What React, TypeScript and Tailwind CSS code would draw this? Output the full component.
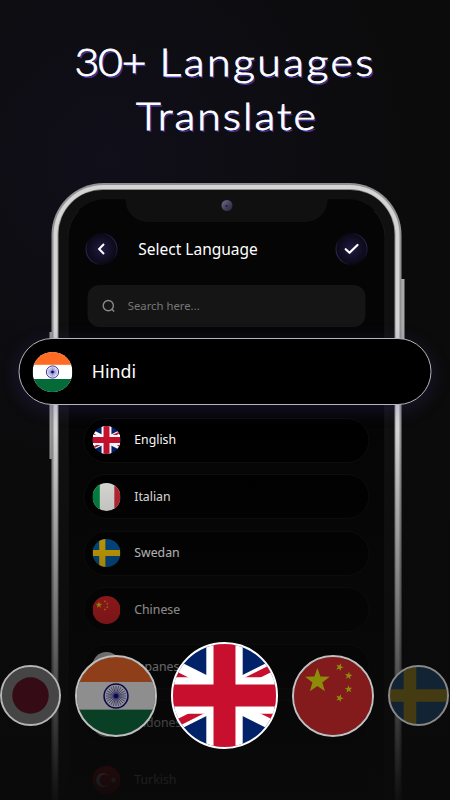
import React from "react";

type FlagName = "in" | "gb" | "it" | "se" | "cn" | "jp" | "id" | "tr" | "cnBig";

function star(cx: number, cy: number, r: number, rot = 0) {
  const pts: string[] = [];
  for (let i = 0; i < 10; i++) {
    const a = ((i * 36 - 90 + rot) * Math.PI) / 180;
    const q = i % 2 ? r * 0.4 : r;
    pts.push(`${(cx + q * Math.cos(a)).toFixed(2)},${(cy + q * Math.sin(a)).toFixed(2)}`);
  }
  return pts.join(" ");
}

const spokes = Array.from({ length: 24 }, (_, i) => (i * 15 * Math.PI) / 180);

function FlagArt({ name }: { name: FlagName }) {
  switch (name) {
    case "in":
      return (
        <g>
          <rect width="100" height="100" fill="#fff" />
          <rect width="100" height="32" fill="#ff6b22" />
          <rect y="67.5" width="100" height="33" fill="#046a38" />
          <circle cx="50" cy="50" r="15.3" fill="none" stroke="#07038d" strokeWidth="2" />
          <circle cx="50" cy="50" r="3" fill="#07038d" />
          {spokes.map((a) => (
            <line key={a} x1="50" y1="50" x2={50 + 13 * Math.cos(a)} y2={50 + 13 * Math.sin(a)} stroke="#07038d" strokeWidth="0.75" />
          ))}
        </g>
      );
    case "gb":
      return (
        <svg x="0" y="0" width="100" height="100" viewBox="15 0 30 30">
          <rect width="60" height="30" fill="#012169" />
          <path d="M0 0L60 30M60 0L0 30" stroke="#fff" strokeWidth="6" />
          <path d="M0 0L30 15V17.236L-4.472 0ZM60 30L30 15V12.764L64.472 30ZM60 0L30 15H25.528L55.528 0ZM0 30L30 15H34.472L4.472 30Z" fill="#c8102e" />
          <path d="M30 0V30M0 15H60" stroke="#fff" strokeWidth="10.6" />
          <path d="M30 0V30M0 15H60" stroke="#c8102e" strokeWidth="6.4" />
        </svg>
      );
    case "it":
      return (
        <g>
          <rect width="100" height="100" fill="#f4f5f0" />
          <rect width="26" height="100" fill="#009246" />
          <rect x="78" width="22" height="100" fill="#ce2b37" />
        </g>
      );
    case "se":
      return (
        <g>
          <rect width="100" height="100" fill="#0059a6" />
          <path d="M24 0h22v39h54v22H46v39H24V61H0V39h24z" fill="#fecb00" />
        </g>
      );
    case "cnBig":
      return (
        <g fill="#ffff00">
          <rect width="100" height="100" fill="#ee2226" />
          <polygon points={star(30, 30.5, 16.5)} />
          <polygon points={star(58.5, 13, 5.2, 20)} />
          <polygon points={star(70, 24, 5.2, 8)} />
          <polygon points={star(70, 41.3, 5.2, -5)} />
          <polygon points={star(58.5, 52.8, 5.2, 20)} />
        </g>
      );
    case "cn":
      return (
        <g fill="#ffee00">
          <rect width="100" height="100" fill="#ee2226" />
          <polygon points={star(23, 32, 12)} />
          <polygon points={star(44, 19, 4.5, 20)} />
          <polygon points={star(53, 28, 4.5, 8)} />
          <polygon points={star(53, 40, 4.5)} />
          <polygon points={star(44, 48, 4.5, 20)} />
        </g>
      );
    case "jp":
      return (
        <g>
          <rect width="100" height="100" fill="#fff" />
          <circle cx="50" cy="50" r="32" fill="#bc1038" />
        </g>
      );
    case "id":
      return (
        <g>
          <rect width="100" height="100" fill="#fff" />
          <rect width="100" height="50" fill="#ce1126" />
        </g>
      );
    case "tr":
      return (
        <g>
          <rect width="100" height="100" fill="#e30a17" />
          <circle cx="38" cy="50" r="25" fill="#fff" />
          <circle cx="45" cy="50" r="20" fill="#e30a17" />
          <polygon points={star(75, 50, 12, -90)} fill="#fff" />
        </g>
      );
  }
}

function Flag({ name, className = "" }: { name: FlagName; className?: string }) {
  return (
    <span className={`block shrink-0 overflow-hidden rounded-full ${className}`}>
      <svg viewBox="0 0 100 100" className="block h-full w-full">
        <FlagArt name={name} />
      </svg>
    </span>
  );
}

const languages: { name: string; flag: FlagName }[] = [
  { name: "English", flag: "gb" },
  { name: "Italian", flag: "it" },
  { name: "Swedan", flag: "se" },
  { name: "Chinese", flag: "cn" },
  { name: "Japanese", flag: "jp" },
  { name: "Indonesian", flag: "id" },
  { name: "Turkish", flag: "tr" },
];

function RoundButton({ children }: { children: React.ReactNode }) {
  return (
    <button className="flex size-8 items-center justify-center rounded-full bg-[linear-gradient(65deg,#4a3c92,#0a0814_32%,#0a0814_65%,#40347c)] p-px">
      <span className="flex size-full items-center justify-center rounded-full bg-[radial-gradient(circle,#211a45_0%,#151029_40%,#060509_90%)]">
        {children}
      </span>
    </button>
  );
}

function Phone() {
  return (
    <div className="relative mx-auto h-[640px] w-[349.5px] translate-x-[1.5px]">
      <div className="absolute -left-[2px] top-[149px] h-[127px] w-1 bg-[#999]" />
      <div className="absolute -right-[3px] top-[96px] h-[70px] w-1 bg-[#aaa]" />
      <div className="relative h-full rounded-t-[52px] bg-[#919191] p-[1.5px]">
        <div className="h-full rounded-t-[50px] bg-[#d5d4d5] p-[4px]">
          <div className="h-full rounded-t-[46px] bg-[#8b8b8b] p-[1.5px]">
            <div className="h-full rounded-t-[44px] bg-[#101010] px-[9px] pt-[9px]">
              <div className="h-full rounded-t-[38px] border-x border-t border-x-[#191919] border-t-[#070707] bg-[#050505]">
                <div className="mx-auto -mt-px flex h-[23px] w-[202px] justify-center rounded-b-[22px] bg-[#101010]">
                  <span className="mt-px flex size-[11px] items-center justify-center rounded-full bg-[linear-gradient(135deg,#746e91,#443e5b_55%,#29243c)]">
                    <span className="size-[2px] rounded-full bg-[#1b172c]" />
                  </span>
                </div>
                <header className="mt-[11px] flex items-center pl-[16.5px] pr-[17px]">
                  <RoundButton>
                    <svg viewBox="0 0 12 14" className="h-[14px] w-3 fill-none stroke-white stroke-2">
                      <path d="M8.5 2 3.6 7l4.9 5" />
                    </svg>
                  </RoundButton>
                  <h2 className="-mt-px ml-[21px] flex-1 text-[15.5px] leading-6 text-white">Select Language</h2>
                  <RoundButton>
                    <svg viewBox="0 0 18 14" className="h-[14px] w-[18px] fill-none stroke-white stroke-[2.2] [stroke-linecap:round] [stroke-linejoin:round]">
                      <path d="m3.2 7.2 3.8 3.6L15 3" />
                    </svg>
                  </RoundButton>
                </header>
                <div className="ml-[18.5px] mt-[20px] flex h-[42px] w-[278px] items-center rounded-xl bg-[#151515] pl-[14px] text-[#777]">
                  <svg viewBox="0 0 14 14" className="size-[14px] fill-none stroke-[#8a8a8a] stroke-[1.4]">
                    <circle cx="6.8" cy="6.6" r="5.1" />
                    <path d="m10.2 10.2 2.5 2.4" />
                  </svg>
                  <span className="ml-[12.5px] text-[11.3px]">Search here...</span>
                </div>
                <div className="relative -ml-[50px] mt-[11px] flex h-[67px] w-[412.5px] items-center rounded-full border-[1.5px] border-[#b5b5b5] bg-black pl-[12.6px] shadow-[0_4px_18px_2px_rgba(80,65,170,0.2)]">
                  <Flag name="in" className="size-10" />
                  <span className="-mt-px ml-[19.4px] text-[17.8px] leading-6 text-white">Hindi</span>
                </div>
                <ul className="ml-[15px] mt-[12.5px] flex w-[286px] flex-col gap-[11.6px]">
                  {languages.map((l) => (
                    <li key={l.name} className="flex h-[45px] items-center rounded-full border border-[#0d0d0d] bg-black pl-2">
                      <Flag name={l.flag} className="size-7" />
                      <span className="ml-[13.5px] pt-px text-[12.3px] text-white">{l.name}</span>
                    </li>
                  ))}
                </ul>
              </div>
            </div>
          </div>
        </div>
      </div>
    </div>
  );
}

export default function App() {
  return (
    <main className="relative h-[800px] w-[450px] overflow-hidden bg-[#0b0b0b] bg-[radial-gradient(ellipse_320px_330px_at_110px_160px,#100f1a,#0b0b0b)] font-['Noto_Sans',sans-serif]">
      <h1 className="flex h-[183px] flex-col items-center pt-[34.5px] font-['Lato','Noto_Sans',sans-serif] text-[37.5px] font-light leading-[54.5px] text-white [-webkit-text-stroke:0.8px_white] [text-shadow:1.4px_1.6px_0_#43319c]">
        <span className="block scale-x-[1.14] whitespace-pre pl-px">
          <span className="tracking-[-1.1px]">30+</span>
          <span className="tracking-[2.4px]"> </span>
          <span className="tracking-[2.2px]">Languages</span>
        </span>
        <span className="block scale-x-[1.14] pl-[3px] tracking-[1.8px]">Translate</span>
      </h1>
      <Phone />
      <div className="absolute inset-x-0 bottom-0 h-[370px] bg-[linear-gradient(to_bottom,rgba(10,10,10,0),rgba(10,10,10,0.93)_95%,rgba(10,10,10,0.97))]" />
      <div className="absolute left-0 top-[642px] flex h-[107px] w-[450px] items-center">
        <div className="size-[61px] shrink-0 rounded-full border-2 border-[#b4b4b4] bg-[#0a0a0a]">
          <Flag name="jp" className="size-full opacity-[0.24]" />
        </div>
        <div className="ml-[14px] size-[82px] shrink-0 rounded-full border-2 border-[#bfbfbf] bg-[#0f0f0f]">
          <Flag name="in" className="size-full opacity-[0.53]" />
        </div>
        <div className="ml-[14px] size-[107px] shrink-0 rounded-full border-2 border-white bg-white">
          <Flag name="gb" className="size-full" />
        </div>
        <div className="ml-[14px] size-[82px] shrink-0 rounded-full border-2 border-[#c0c0c0] bg-[#141414]">
          <Flag name="cnBig" className="size-full opacity-[0.51]" />
        </div>
        <div className="ml-[14px] size-[61px] shrink-0 rounded-full border-2 border-[#888] bg-[#171717]">
          <Flag name="se" className="size-full opacity-20" />
        </div>
      </div>
    </main>
  );
}
